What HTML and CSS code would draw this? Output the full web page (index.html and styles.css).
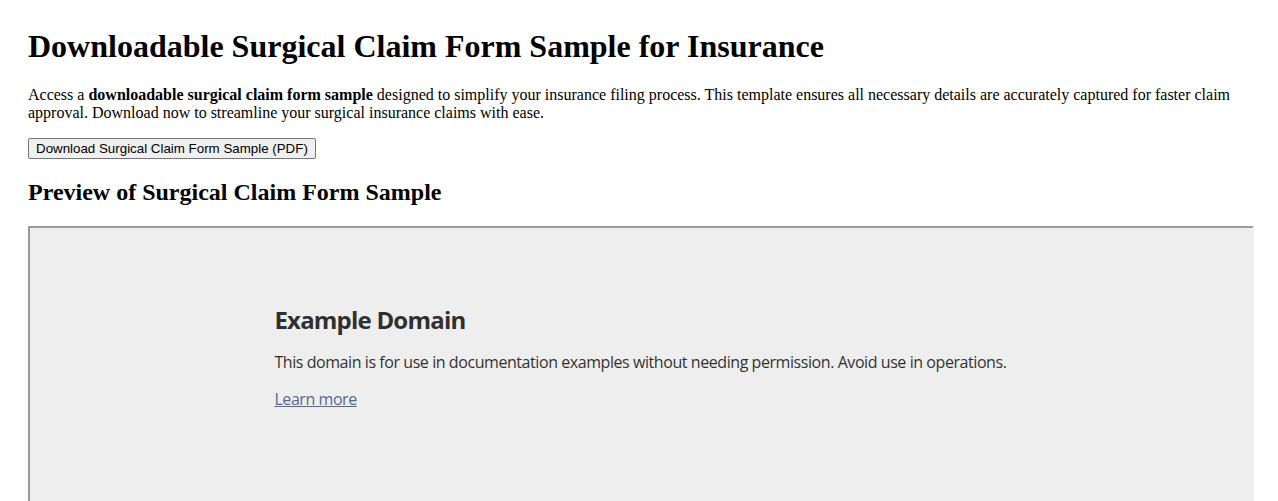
FILE: index.html
```html
<!DOCTYPE html>
<html lang="en">
<head>
    <meta charset="UTF-8">
    <meta name="viewport" content="width=device-width, initial-scale=1.0">
    <title>Downloadable Surgical Claim Form Sample for Insurance</title>
    <link rel="stylesheet" href="styles.css">
</head>
<body>
    <h1>Downloadable Surgical Claim Form Sample for Insurance</h1>
    <p>Access a <strong>downloadable surgical claim form sample</strong> designed to simplify your insurance filing process. This template ensures all necessary details are accurately captured for faster claim approval. Download now to streamline your surgical insurance claims with ease.</p>

    <div class="download">
        <button onclick="downloadForm()">Download Surgical Claim Form Sample (PDF)</button>
    </div>

    <h2>Preview of Surgical Claim Form Sample</h2>
    <div class="preview">
        <div class="domain">
            <h3>Example Domain</h3>
            <p>This domain is for use in documentation examples without needing permission. Avoid use in operations.</p>
            <p><a href="#">Learn more</a></p>
        </div>
    </div>

    <script>
        function downloadForm() {
            alert("Download is not available offline.");
        }
    </script>
</body>
</html>
```

FILE: styles.css
```css
body {
    font-family: "Liberation Serif", "Times New Roman", serif;
    margin: 0;
    padding: 28px 28px 0;
    background: white;
    color: black;
}
h1 {
    font-size: 32px;
    margin: 0 0 21px;
}
p {
    font-size: 16px;
    margin: 16px 0;
}
.download button {
    font-family: "Liberation Sans", Arial, sans-serif;
    font-size: 13.33px;
    background: #efefef;
    border: 1px solid #767676;
    border-radius: 2px;
    padding: 2px 7px;
}
h2 {
    font-size: 24px;
    margin: 20px 0;
}
.preview {
    width: 100%;
    height: 500px;
    border: 2px solid #9a9a9a;
    border-right-color: #efefef;
    border-bottom-color: #efefef;
    background: #eeeeee;
}
.domain {
    width: 60%;
    margin: 75px auto 0;
    font-family: "Open Sans", "Noto Sans", sans-serif;
    opacity: 0.8;
    white-space: nowrap;
}
.domain h3 {
    font-size: 24px;
    margin: 0 0 16px;
    letter-spacing: -0.033em;
}
.domain p {
    line-height: 1.33;
    letter-spacing: -0.027em;
}
.domain a {
    color: #334488;
}
```
